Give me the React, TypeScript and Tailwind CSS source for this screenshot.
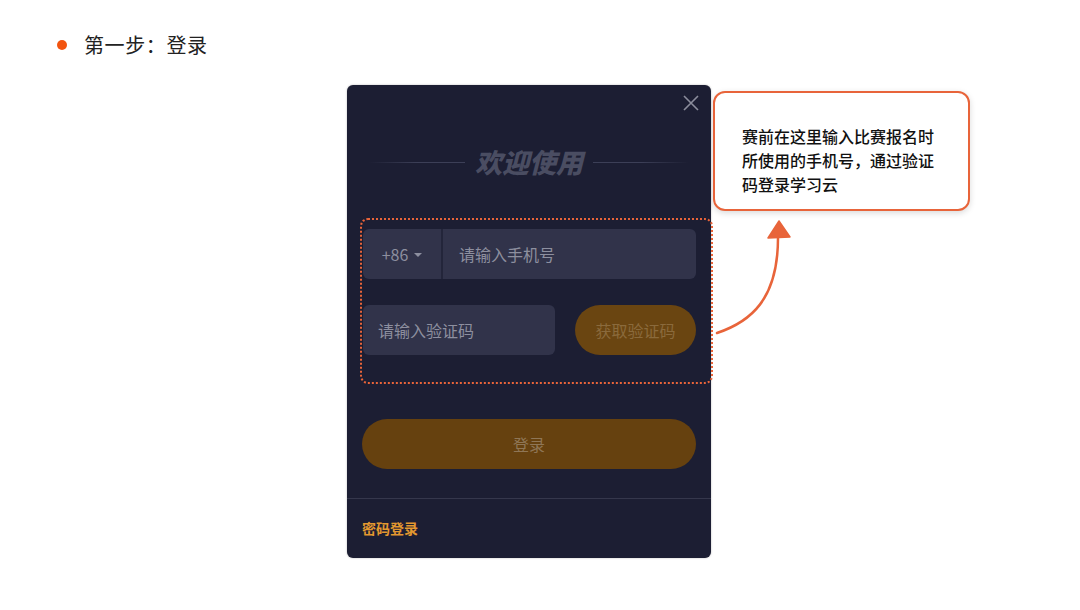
import React from "react";

const cjk = { fontFamily: '"Noto Sans CJK SC", "Noto Sans", sans-serif' };

function Arrow() {
  return (
    <svg
      className="pointer-events-none absolute left-0 top-0"
      width="1080"
      height="610"
      viewBox="0 0 1080 610"
    >
      <path
        d="M717 333 C 750 322, 778 300, 778 238"
        fill="none"
        stroke="#e8643a"
        strokeWidth="2.5"
        strokeLinecap="round"
      />
      <path d="M768 238 L779 221 L790 237 Z" fill="#e8643a" stroke="#e8643a" strokeWidth="1.5" strokeLinejoin="round" />
    </svg>
  );
}

function LoginModal() {
  return (
    <div className="relative flex h-[473px] w-[364px] flex-col rounded-[6px] bg-[#1c1e33] shadow-[0_0_2px_rgba(0,0,0,0.3)]">
      <button className="absolute right-[11px] top-[9px] text-[#8b8d9c]">
        <svg width="18" height="18" viewBox="0 0 18 18" fill="none" stroke="currentColor" strokeWidth="1.6">
          <path d="M2 2 L16 16 M16 2 L2 16" />
        </svg>
      </button>

      <div className="flex h-[133px] items-start pt-[59px]">
        <div className="flex w-full items-center gap-[10px] px-[22px]">
          <div className="h-px flex-1 bg-gradient-to-r from-transparent via-[#3c3f57] to-[#3c3f57]" />
          <span className="text-[27px] font-black italic leading-[36px] text-[#4a4d62]" style={cjk}>
            欢迎使用
          </span>
          <div className="h-px flex-1 bg-gradient-to-l from-transparent via-[#3c3f57] to-[#3c3f57]" />
        </div>
      </div>

      <div className="ml-[13px] mr-[-2px] h-[166px] rounded-[8px] border-2 border-dotted border-[#e8643a] pl-px pt-[9px]">
        <div className="flex h-[50px] w-[333px] overflow-hidden rounded-[6px] bg-[#31334a]">
          <div className="flex w-[78px] items-center justify-center gap-[6px] text-[16px] text-[#8d8f9f]" style={cjk}>
            +86
            <span className="mt-[2px] border-x-[4px] border-t-[4px] border-x-transparent border-t-[#8d8f9f]" />
          </div>
          <div className="w-[2px] bg-[#23253a]" />
          <div className="flex flex-1 items-center pl-[16px] text-[16px] text-[#8d8f9f]" style={cjk}>
            请输入手机号
          </div>
        </div>
        <div className="mt-[26px] flex w-[333px] items-center justify-between">
          <div className="flex h-[50px] w-[192px] items-center rounded-[6px] bg-[#31334a] pl-[15px] text-[16px] text-[#8d8f9f]" style={cjk}>
            请输入验证码
          </div>
          <div className="flex h-[50px] w-[121px] items-center justify-center rounded-full bg-[#6a4511] text-[16px] text-[#8a6a3c]" style={cjk}>
            获取验证码
          </div>
        </div>
      </div>

      <div className="ml-[15px] mt-[35px] flex h-[50px] w-[334px] items-center justify-center rounded-full bg-[#66410f] text-[16px] text-[#8f7656]" style={cjk}>
        登录
      </div>

      <div className="mt-[29px] h-px bg-[#35374c]" />
      <div className="flex flex-1 items-center pl-[15px]">
        <span className="text-[14px] font-bold text-[#e3982f]" style={cjk}>
          密码登录
        </span>
      </div>
    </div>
  );
}

export default function App() {
  return (
    <div className="relative h-[610px] w-[1080px] overflow-hidden bg-white">
      <div className="flex items-center pl-[57px] pt-[32px]">
        <span className="h-[10px] w-[10px] rounded-full bg-[#f2540f]" />
        <span className="ml-[17px] text-[20px] leading-[26px] tracking-[0.6px] text-[#222]" style={cjk}>
          第一步：登录
        </span>
      </div>

      <div className="mt-[27px] flex items-start pl-[347px]">
        <LoginModal />
        <div className="ml-[2px] mt-[6px] h-[120px] w-[257px] rounded-[12px] border-2 border-[#e8643a] bg-white pl-[27px] pt-[31px] shadow-[0_2px_6px_rgba(0,0,0,0.15)]">
          <p className="text-[16px] font-medium leading-[24px] text-[#111]" style={cjk}>
            赛前在这里输入比赛报名时
            <br />
            所使用的手机号，通过验证
            <br />
            码登录学习云
          </p>
        </div>
      </div>

      <Arrow />
    </div>
  );
}
